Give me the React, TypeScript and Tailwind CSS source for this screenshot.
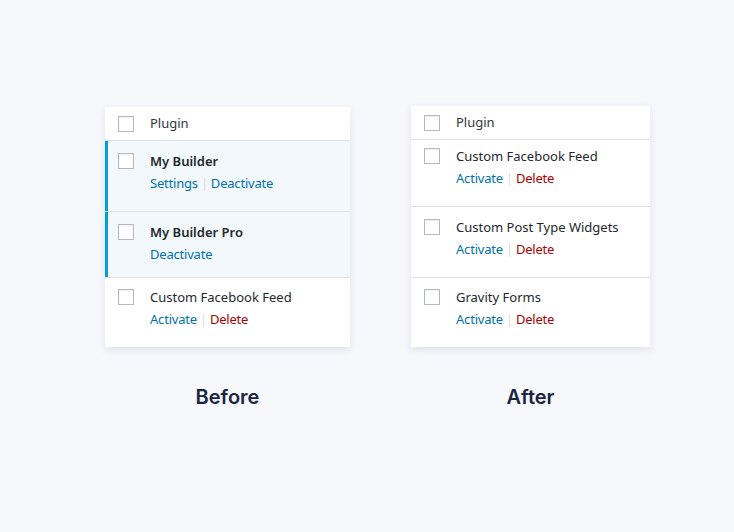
import React from "react";

type Action = { label: string; danger?: boolean };

interface RowProps {
  name: string;
  actions: Action[];
  active?: boolean;
  bold?: boolean;
  h: string;
  pt: string;
  last?: boolean;
}

const Checkbox = () => (
  <span className="block w-4 h-4 shrink-0 border border-[#b4b9be] bg-white shadow-[inset_0_1px_2px_rgba(0,0,0,0.07)]" />
);

const Row = ({ name, actions, active, bold, h, pt, last }: RowProps) => (
  <div
    className={`flex ${h} ${pt} ${last ? "" : "border-b border-[#e1e2e4]"} ${
      active ? "bg-[#f3f8fc] shadow-[inset_3px_0_0_#00a0d2]" : "bg-white"
    }`}
  >
    <div className="w-[45px] pl-[13px] pt-[2px]">
      <Checkbox />
    </div>
    <div className="flex flex-col">
      <span
        className={`leading-5 text-[13px] text-[#23282d] ${bold ? "font-semibold" : ""}`}
      >
        {name}
      </span>
      <div className="mt-[2px] leading-5 text-[13px] tracking-[-0.2px] flex items-center">
        {actions.map((a, i) => (
          <React.Fragment key={a.label}>
            {i > 0 && <span className="mx-[3px] text-[#dcdcdc]">|</span>}
            <span className={a.danger ? "text-[#a00]" : "text-[#0073aa]"}>
              {a.label}
            </span>
          </React.Fragment>
        ))}
      </div>
    </div>
  </div>
);

const Header = ({ h }: { h: string }) => (
  <div className={`flex items-center ${h} border-b border-[#e1e2e4]`}>
    <div className="w-[45px] pl-[13px]">
      <Checkbox />
    </div>
    <span className="text-[13px] text-[#32373c]">Plugin</span>
  </div>
);

const activate: Action[] = [{ label: "Activate" }, { label: "Delete", danger: true }];

export default function App() {
  return (
    <div
      className="w-[734px] h-[532px] bg-[#f6f8fc] flex pl-[105px] pt-[106px] gap-[61px]"
      style={{ fontFamily: '"Noto Sans", "Open Sans", sans-serif' }}
    >
      <div className="w-[245px] flex flex-col pt-px">
        <div className="bg-white shadow-[0_3px_8px_rgba(30,40,70,0.1)]">
          <Header h="h-[34px]" />
          <Row
            name="My Builder"
            bold
            active
            actions={[{ label: "Settings" }, { label: "Deactivate" }]}
            h="h-[71px]"
            pt="pt-[10px]"
          />
          <Row
            name="My Builder Pro"
            bold
            active
            actions={[{ label: "Deactivate" }]}
            h="h-[66px]"
            pt="pt-[10px]"
          />
          <Row
            name="Custom Facebook Feed"
            actions={activate}
            h="h-[69px]"
            pt="pt-[9px]"
            last
          />
        </div>
        <h2
          className="mt-[36px] text-center text-[20px] leading-7 font-semibold text-[#1c2443]"
          style={{ fontFamily: "Inter, Lato, sans-serif" }}
        >
          Before
        </h2>
      </div>

      <div className="w-[239px] flex flex-col">
        <div className="bg-white shadow-[0_3px_8px_rgba(30,40,70,0.1)]">
          <Header h="h-[34px]" />
          <Row
            name="Custom Facebook Feed"
            actions={activate}
            h="h-[67px]"
            pt="pt-[6px]"
          />
          <Row
            name="Custom Post Type Widgets"
            actions={activate}
            h="h-[71px]"
            pt="pt-[10px]"
          />
          <Row name="Gravity Forms" actions={activate} h="h-[69px]" pt="pt-[9px]" last />
        </div>
        <h2
          className="mt-[36px] text-center text-[20px] leading-7 font-semibold text-[#1c2443]"
          style={{ fontFamily: "Inter, Lato, sans-serif" }}
        >
          After
        </h2>
      </div>
    </div>
  );
}
